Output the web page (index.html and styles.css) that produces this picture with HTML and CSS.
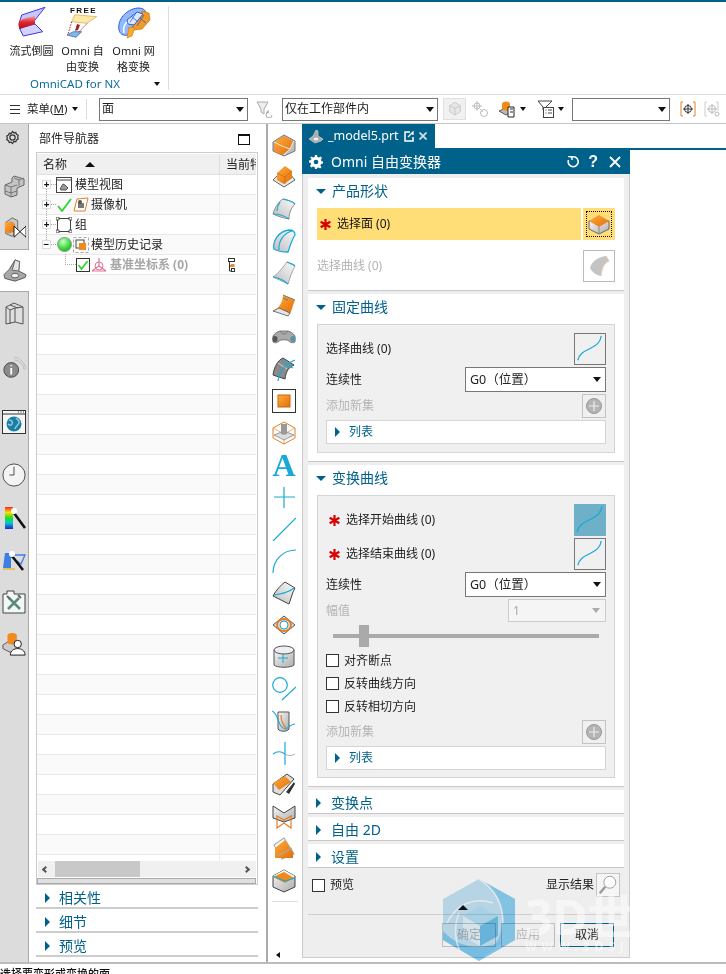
FILE: index.html
```html
<!DOCTYPE html>
<html lang="zh-CN">
<head>
<meta charset="utf-8">
<title>Omni 自由变换器</title>
<link rel="stylesheet" href="styles.css">
</head>
<body>
<svg class="defs" width="0" height="0" aria-hidden="true">
  <defs>
    <linearGradient id="gOrange" x1="0" y1="0" x2="1" y2="1"><stop offset="0" stop-color="#ffab3d"/><stop offset="1" stop-color="#e36f0a"/></linearGradient>
    <linearGradient id="gGrey" x1="0" y1="0" x2="1" y2="1"><stop offset="0" stop-color="#f6f6f6"/><stop offset="1" stop-color="#adadad"/></linearGradient>
    <linearGradient id="gSoft" x1="1" y1="0" x2="0" y2="1"><stop offset="0" stop-color="#fbfbfb"/><stop offset="1" stop-color="#bcbcbc"/></linearGradient>
    <linearGradient id="gRed" x1="0" y1="0" x2="0" y2="1"><stop offset="0" stop-color="#f7a0a0"/><stop offset=".5" stop-color="#d9262e"/><stop offset="1" stop-color="#b5121a"/></linearGradient>
    <radialGradient id="gBall" cx=".4" cy=".3" r=".8"><stop offset="0" stop-color="#c8ffc8"/><stop offset=".6" stop-color="#3fd93f"/><stop offset="1" stop-color="#14a014"/></radialGradient>
    <symbol id="i-box" viewBox="0 0 24 24"><path d="M1 9 12 2l11 6v10l-11 5-11-5z" fill="#bdbdbd" stroke="#777"/><path d="M2 9 12 3l9 5-3 8-8 6-8-4z" fill="url(#gOrange)"/><path d="M12 22l6-6 4-8M18 16 10 13 2 9" fill="none" stroke="#f4f4f4" stroke-width=".9"/></symbol>
    <symbol id="i-box-flat" viewBox="0 0 24 24"><path d="M1 15 6 10l12-1 5 6-11 7z" fill="#e6e6e6" stroke="#666"/><path d="M5 8 13 1l7 5 0 7-8 6-7-4z" fill="url(#gOrange)"/><path d="M5 8l8 4 7-6M13 12v7" fill="none" stroke="#c66a0f" stroke-width=".7"/></symbol>
    <symbol id="i-surf1" viewBox="0 0 24 24"><path d="M1 17C3 10 7 4 11 2c4 1 9 2 12 5-4 4-6 9-6 15-6-1-12-3-16-5z" fill="url(#gSoft)" stroke="#666" stroke-width=".7"/><path d="M11 2c4 1 9 2 12 5M1 17c6 0 12 2 16 5M8 5c-2 3-3 6-3 9" fill="none" stroke="#19a9d8" stroke-width="1.200"/></symbol>
    <symbol id="i-surf2" viewBox="0 0 24 24"><path d="M2 20C0 12 7 2 17 1c4 0 6 2 6 5-4 6-5 12-7 17-5 0-11-1-14-3z" fill="url(#gSoft)" stroke="#19a9d8" stroke-width="1.300"/><path d="M7 21C6 12 12 4 20 2" fill="none" stroke="#19a9d8" stroke-width="1.200"/></symbol>
    <symbol id="i-surf3" viewBox="0 0 24 24"><path d="M1 16C7 12 11 6 15 1l8 4c-3 5-5 12-7 18z" fill="url(#gSoft)" stroke="#777" stroke-width=".6"/><path d="M1 16c6 1 11 3 15 7M15 1c3 1 6 2 8 4" fill="none" stroke="#19a9d8" stroke-width="1.200"/></symbol>
    <symbol id="i-surf4" viewBox="0 0 24 24"><path d="M1 18c5-2 10-8 10-16l12 5c-2 5-3 9-5 14z" fill="url(#gOrange)"/><path d="M11 2l12 5M11 5l5 2" fill="none" stroke="#777" stroke-width="1"/><path d="M1 18l15 5 2-3-11-5z" fill="#e4e4e4" stroke="#555" stroke-width=".8"/></symbol>
    <symbol id="i-pipe" viewBox="0 0 24 24"><path d="M1 11c2-3 4-4 7-5h8c3 1 5 2 7 5v6c-2 1-3 1-5 0-2-3-10-3-12 0-2 1-3 1-5 0z" fill="#a9a9a9" stroke="#666" stroke-width=".8"/><path d="M8 6c2 4 6 4 8 0" fill="none" stroke="#777"/><ellipse cx="3" cy="14" rx="2.600" ry="3" fill="#555"/><ellipse cx="21" cy="14" rx="2.600" ry="3" fill="#5f8fa3"/></symbol>
    <symbol id="i-sweep" viewBox="0 0 24 24"><path d="M1 18C2 10 6 3 11 1l11 7c-5 2-8 6-9 14z" fill="#8a8a8a" stroke="#444"/><path d="M6 6l9 6" stroke="#d0d0d0"/><path d="M6 24C7 14 13 7 23 3M11 3c3 5 6 6 10 8" fill="none" stroke="#19a9d8" stroke-width="1.200"/></symbol>
    <symbol id="i-square" viewBox="0 0 24 24"><rect x=".5" y=".5" width="23" height="23" fill="#fff" stroke="#333"/><rect x="6" y="6" width="12" height="12" fill="url(#gOrange)" stroke="#c9650c"/></symbol>
    <symbol id="i-iso" viewBox="0 0 24 24"><path d="M12 1 23 7v10l-11 6L1 17V7z" fill="none" stroke="#e67e22"/><path d="M1 7l11 6 11-6M12 13v10" fill="none" stroke="#e67e22" stroke-width=".6"/><path d="M2 14l10-4 10 4-10 5z" fill="#ddd" stroke="#777" stroke-width=".7"/><path d="M9 3h6v10c-2 1-4 1-6 0z" fill="#999"/></symbol>
    <symbol id="i-plus" viewBox="0 0 24 24"><path d="M12 2v21M2 12h21" stroke="#19a9d8" stroke-width="1.200" fill="none"/></symbol>
    <symbol id="i-line" viewBox="0 0 24 24"><path d="M1 24 24 1" stroke="#19a9d8" stroke-width="1.200" fill="none"/></symbol>
    <symbol id="i-arc" viewBox="0 0 24 24"><path d="M1 24C1 11 11 1 24 1" stroke="#19a9d8" stroke-width="1.200" fill="none"/></symbol>
    <symbol id="i-patch" viewBox="0 0 24 24"><path d="M1 15C4 9 9 4 13 1l10 6c-3 5-4 11-6 16z" fill="url(#gSoft)" stroke="#444"/><path d="M2 14c7-1 14-2 20-7" fill="none" stroke="#19a9d8" stroke-width="1.200"/></symbol>
    <symbol id="i-ring" viewBox="0 0 24 24"><path d="M1 12 12 3l11 9-11 9z" fill="#ddd" stroke="#555"/><ellipse cx="12" cy="12" rx="7" ry="6" fill="none" stroke="#e67e22" stroke-width="2"/><circle cx="12" cy="12" r="4" fill="#fff" stroke="#19a9d8"/></symbol>
    <symbol id="i-cyl" viewBox="0 0 24 24"><path d="M2 5v15c2 3 18 3 20 0V5z" fill="url(#gGrey)" stroke="#555"/><ellipse cx="12" cy="5" rx="10" ry="4" fill="#eee" stroke="#555"/><path d="M11 8v10M6 13h10" stroke="#19a9d8"/></symbol>
    <symbol id="i-circline" viewBox="0 0 24 24"><circle cx="8" cy="8" r="7.300" fill="none" stroke="#19a9d8" stroke-width="1.200"/><path d="M10 23 24 10" stroke="#19a9d8" stroke-width="1.200"/></symbol>
    <symbol id="i-cylcurve" viewBox="0 0 24 24"><path d="M6 3h11v17c-2 3-9 3-11 0z" fill="url(#gGrey)" stroke="#555"/><path d="M0 2c8 4 5 17 14 18 4-3 6-5 9-5" fill="none" stroke="#19a9d8" stroke-width="1.100"/><path d="M9 6c0 6 2 10 5 13" fill="none" stroke="#e67e22" stroke-width="1.200"/></symbol>
    <symbol id="i-cross" viewBox="0 0 24 24"><path d="M13 1v23" stroke="#19a9d8" stroke-width="1.200"/><path d="M1 13c4-3 8-3 12 0" fill="none" stroke="#19a9d8" stroke-width="1.100"/><path d="M13 13c3 2 7 2 10 0" fill="none" stroke="#aaa"/></symbol>
    <symbol id="i-pen" viewBox="0 0 24 24"><path d="M1 11 15 1l7 5-14 16-7-3z" fill="#ddd" stroke="#444"/><path d="M1 10 13 3l6 6-12 8z" fill="url(#gOrange)"/><path d="M14 19 22 9l1 2-6 10z" fill="#333"/></symbol>
    <symbol id="i-bow" viewBox="0 0 24 24"><path d="M1 1 12 8 23 1v12l-11 4L1 13z" fill="url(#gGrey)" stroke="#444"/><path d="M5 23V11l7 4 7-4v12l-7-5z" fill="none" stroke="#e67e22" stroke-width="1.200"/></symbol>
    <symbol id="i-sect" viewBox="0 0 24 24"><path d="M2 8 12 1l10 16-12 5z" fill="none" stroke="#aaa" stroke-width="1.200"/><path d="M3 11 13 3l8 12v6H3z" fill="url(#gOrange)"/><path d="M6 19 20 11" stroke="#aaa" stroke-width="1.300"/></symbol>
    <symbol id="i-cut" viewBox="0 0 24 24"><path d="M1 7 12 1l11 6v11l-11 5-11-5z" fill="url(#gGrey)" stroke="#444"/><path d="M1 7 12 1l11 6-10 5z" fill="#f2f2f2"/><path d="M1 8 12 3l10 6-9 5z" fill="#f08a1d"/><path d="M1 7l12 5 10-3" fill="none" stroke="#19a9d8" stroke-width="1.200"/></symbol>
    <symbol id="i-curve" viewBox="0 0 32 32"><path d="M3 28C5 20 11 18 17 15c6-3 10-6 11-13" fill="none" stroke="#19a9d8" stroke-width="1.300"/></symbol>
    <symbol id="i-addset" viewBox="0 0 24 24"><rect x=".5" y=".5" width="23" height="23" fill="#f0f0f0" stroke="#c4c4c4"/><circle cx="12" cy="12" r="7.500" fill="#b4b4b4" stroke="#999"/><path d="M12 7v10M7 12h10" stroke="#eee" stroke-width="1.200"/></symbol>
    <symbol id="i-star" viewBox="0 0 12 12"><path d="M6 0v12M.7 3 11.300 9M.7 9 11.300 3" stroke="#d90000" stroke-width="2.400"/></symbol>
    <symbol id="i-wire" viewBox="0 0 24 24"><path d="M4 7 12 2l8 5v9l-8 5-8-5z" fill="#e7e7e7" stroke="#bbb"/><path d="M12 11v10M4 7l8 4 8-4" stroke="#bbb" fill="none"/></symbol>
  </defs>
</svg>

<div class="topline"></div>

<header class="ribbon">
  <div class="ribbon-group">
    <div class="ribbon-tools">
      <div class="rtool">
        <svg class="rtool-icon" viewBox="0 0 32 32"><path d="M5.700 9 29 1.300 19 14 3.500 16z" fill="#c9c6ff" stroke="#3a38e0"/><path d="M3.300 22 19 18l7.700 7.700L7.300 30z" fill="#d4d2ff" stroke="#3a38e0"/><path d="M3.300 15C8 12 14 11 19 10v8L4 23C2 21 2 17 3.300 15z" fill="url(#gRed)"/></svg>
        <span>流式倒圆</span>
      </div>
      <div class="rtool">
        <svg class="rtool-icon" viewBox="0 0 32 32"><text x="3" y="7" class="free-label">FREE</text><path d="M8 8.700 29.700 10.700 19.700 17.300 4.700 15.700z" fill="#ffe9a8" stroke="#d2aa44" stroke-width=".7"/><path d="M0 29l6.300-3.300h8.400L9 31.300z" fill="#7fb7ea" stroke="#2a5f99" stroke-width=".7"/><path d="M4.700 15.700 1 28M20 17.500 11 27" stroke="#b32020" fill="none" stroke-dasharray="1.500 1.200"/><path d="M8 25l2-7 3 1-2 5z" fill="#a51f1f"/></svg>
        <span>Omni 自<br>由变换</span>
      </div>
      <div class="rtool">
        <svg class="rtool-icon" viewBox="0 0 32 32"><path d="M1 24C-1 14 8 3 20 2c6 0 9 3 7 8L14 21l-4 8c-5 1-8-1-9-5z" fill="#92b9ff" stroke="#2a5fd0"/><path d="M24 5l7 2 1 7-8 9-8 1-1-4z" fill="#f59a23" stroke="#b76a0a" stroke-width=".6"/><path d="M11 21l6 1-3 8-5 2z" fill="#f9a92b" stroke="#c97f10" stroke-width=".6"/><path d="M9 14 19 6l6 2-9 11-6-1z" fill="#dce8ff" stroke="#2a5fd0"/><path d="M13 10l7 6M18 7l-6 9M26 9l-7 11M22 12l6 5" stroke="#2a5fd0" stroke-width=".8"/><path d="M6 27c-1-4 0-8 3-11" fill="none" stroke="#fff" stroke-width="1.500"/></svg>
        <span>Omni 网<br>格变换</span>
      </div>
    </div>
    <div class="ribbon-group-label"><span>OmniCAD for NX</span><i class="tri-down tri-small"></i></div>
  </div>
</header>

<nav class="toolbar">
  <div class="menu-btn">
    <svg class="hamburger" viewBox="0 0 10 9"><path d="M0 .5h10M0 4.500h10M0 8.500h10" stroke="#333"/></svg>
    <span>菜单(<u>M</u>)</span>
    <i class="tri-down tri-small"></i>
  </div>
  <div class="tb-sep"></div>
  <div class="select sel-type"><span>面</span><i class="tri-down"></i></div>
  <svg class="tb-icon tb-filter" viewBox="0 0 17 17"><path d="M1 1h11L8 8v5L5 11V8z" fill="#eee" stroke="#aaa"/><path d="M16 14a3 3 0 1 1-3-3h-2m1.500-1.500L10.500 11l1.500 1.500" fill="none" stroke="#aaa"/></svg>
  <div class="select sel-scope"><span>仅在工作部件内</span><i class="tri-down"></i></div>
  <div class="tb-boxed"><svg class="tb-icon" viewBox="0 0 24 24"><use href="#i-wire"/></svg></div>
  <svg class="tb-icon tb-link" viewBox="0 0 17 17"><circle cx="5" cy="5" r="3" fill="none" stroke="#bbb"/><circle cx="12" cy="12" r="3.500" fill="none" stroke="#bbb"/><path d="M5 0v10M0 5h10M8 8l3 3" stroke="#bbb"/></svg>
  <svg class="tb-icon tb-db" viewBox="0 0 18 18"><path d="M1 11 8 8l7 3-7 4z" fill="#bbb" stroke="#555"/><ellipse cx="8" cy="4" rx="4" ry="2.500" fill="#f08a1d"/><path d="M4 4v5c1 2 7 2 8 0V4z" fill="#f08a1d"/><path d="M10 7h6v10h-6z" fill="#fff" stroke="#222"/><path d="M12 9h3M12 12h3" stroke="#222"/></svg>
  <i class="tri-down tri-small tb-arrow"></i>
  <svg class="tb-icon tb-filter2" viewBox="0 0 17 18"><path d="M1 1h14L9 7v3H6V7z" fill="#fff" stroke="#444"/><rect x="6.500" y="7.500" width="10" height="10" fill="#fff" stroke="#444"/><path d="M8.500 10h1M11 10h4M8.500 13h1M11 13h4" stroke="#444"/></svg>
  <i class="tri-down tri-small tb-arrow2"></i>
  <div class="select sel-blank"><span></span><i class="tri-down"></i></div>
  <svg class="tb-icon tb-snap" viewBox="0 0 16 16"><path d="M3 1H1v14h2M13 1h2v14h-2" stroke="#e67e22" fill="none"/><circle cx="8" cy="8" r="3.500" fill="none" stroke="#333"/><path d="M8 3v10M3 8h10" stroke="#333"/></svg>
  <svg class="tb-icon tb-snap2" viewBox="0 0 16 16"><path d="M3 1H1v14h2M12 1h2v9" stroke="#ccc" fill="none"/><circle cx="8" cy="8" r="3.500" fill="none" stroke="#bbb"/><path d="M8 3v10M3 8h10" stroke="#bbb"/><circle cx="13" cy="13" r="2" fill="none" stroke="#bbb"/></svg>
</nav>

<main class="main">
  <aside class="rail">
    <div class="rail-top">
      <svg class="rail-gear" viewBox="0 0 16 16"><path d="M8 1.500l1.500 1.500 2-.3.800 2 1.800.9-.6 2 .6 2-1.800.9-.8 2-2-.3L8 14.500l-1.500-1.500-2 .3-.8-2-1.800-.9.600-2-.6-2 1.800-.9.800-2 2 .3z" fill="none" stroke="#333" stroke-width="1.300"/><circle cx="8" cy="8" r="2.800" fill="none" stroke="#333" stroke-width="1.300"/></svg>
    </div>
    <div class="rail-item"><svg viewBox="0 0 24 24"><path d="M12 2l10 3v6l-7 3v7l-6 2-6-3v-9l7-3V4z" fill="#c4c4c4" stroke="#666"/><path d="M3 11l6 2 6-2M9 13v10M12 4l5 2 5-2M17 6v6M3 17l6 2 6-2" fill="none" stroke="#777"/></svg></div>
    <div class="rail-item"><svg viewBox="0 0 26 26"><path d="M4 7 11 2l6 3v12l-6 5-7-3z" fill="#c8c8c8" stroke="#666"/><path d="M3 7l8-1 3 3v8l-8 2-3-3z" fill="url(#gOrange)"/><path d="M13 11 26 23V11L13 23z" fill="#fff" stroke="#111"/></svg></div>
    <div class="rail-item rail-active"><svg viewBox="0 0 26 26"><path d="M1 17 7 11 13 1l5 2-1 10 8 4-1 3-11 4-11-3z" fill="#a8a8a8" stroke="#555"/><path d="M13 1l5 2-1 10-7-1z" fill="#e4e4e4" stroke="#666"/><ellipse cx="13" cy="18" rx="4" ry="2.500" fill="#f1f1f1" stroke="#555"/></svg></div>
    <div class="rail-item"><svg viewBox="0 0 24 24"><path d="M4 6 12 2l9 4v17l-8-2-9 2z" fill="#dedede" stroke="#555"/><path d="M4 6l4 3v14M8 9l5-2v14M13 7l8-1M8 4l8 3" fill="none" stroke="#555"/></svg></div>
    <div class="rail-group-a">
      <div class="rail-item"><svg viewBox="0 0 26 26"><circle cx="10" cy="14" r="8" fill="#8a8a8a" stroke="#444"/><path d="M10 9v1M10 12v7" stroke="#fff" stroke-width="2"/><path d="M13 3a12 12 0 0 1 11 11M13 0a15 15 0 0 1 13 14" fill="none" stroke="#bbb"/></svg></div>
      <div class="rail-item"><svg viewBox="0 0 24 24"><rect x=".5" y=".5" width="23" height="23" fill="#f6f6f6" stroke="#333"/><path d="M.5 4h23M16 2h1M18.500 2h1M21 2h1" stroke="#333"/><circle cx="12" cy="14" r="7.500" fill="#1b7fa3"/><path d="M7 10c3 0 4 2 3 4s-3 1-4 0M14 8c2 2 4 3 3 5s-4 4-4 6" fill="none" stroke="#8ecbdb" stroke-width="1.500"/></svg></div>
      <div class="rail-item"><svg viewBox="0 0 26 26"><circle cx="13" cy="13" r="12" fill="#f4f4f4" stroke="#444"/><path d="M13 4v9H8" fill="none" stroke="#444"/></svg></div>
    </div>
    <div class="rail-group-b">
      <div class="rail-item"><svg viewBox="0 0 24 24"><defs><linearGradient id="gHue" x1="0" y1="0" x2="0" y2="1"><stop offset="0" stop-color="#f22"/><stop offset=".25" stop-color="#fd0"/><stop offset=".5" stop-color="#2d2"/><stop offset=".72" stop-color="#0cc"/><stop offset="1" stop-color="#22c"/></linearGradient></defs><rect x="3" y="1" width="8" height="22" fill="url(#gHue)"/><path d="M12 7l11 15" stroke="#111" stroke-width="2.600"/><circle cx="12" cy="5" r="3" fill="#fff"/></svg></div>
      <div class="rail-item"><svg viewBox="0 0 24 24"><path d="M3 5h6v15H1z" fill="#3b7fe0"/><path d="M7 7h16l-4 9z" fill="none" stroke="#3b7fe0" stroke-width="1.300"/><path d="M1 21h12" stroke="#e8b82e" stroke-width="1.500"/><path d="M10 8l11 14" stroke="#111" stroke-width="2.500"/><circle cx="10" cy="6" r="3" fill="#fff"/></svg></div>
      <div class="rail-item"><svg viewBox="0 0 24 24"><path d="M1 4h4V1h7v3h11v19H1z" fill="#f4f7f7" stroke="#444"/><path d="M6 19 17 8M7 8l11 11" stroke="#5a8a7a" stroke-width="2.500"/><path d="M5 6l3 3M16 5l3 3" stroke="#666" stroke-width="2"/></svg></div>
      <div class="rail-item"><svg viewBox="0 0 26 26"><path d="M1 14 9 9l8 4v5l-8 4-8-4z" fill="#ccc" stroke="#555"/><ellipse cx="11" cy="4" rx="5" ry="3" fill="#f08a1d"/><path d="M6 4v8c1 2 9 2 10 0V4z" fill="#f08a1d"/><circle cx="17" cy="13" r="4" fill="#fff" stroke="#111"/><path d="M9 25c0-5 4-7 8-7s8 2 8 7z" fill="#fff" stroke="#111"/></svg></div>
    </div>
  </aside>

  <section class="nav">
    <div class="nav-head"><span>部件导航器</span><i class="maximize"></i></div>
    <div class="nav-frame">
      <div class="tbl-head"><div class="c-name"><span>名称</span><i class="tri-up"></i></div><div class="c-cur">当前特</div></div>
      <div class="row">
        <div class="c-name"><i class="exp">+</i><svg class="ti16" viewBox="0 0 16 16"><rect x=".5" y=".5" width="15" height="15" fill="#fff" stroke="#444"/><path d="M.5 3h15" stroke="#444"/><path d="M4 12l3-5 2 1 3 3-2 2H5z" fill="#999" stroke="#555"/></svg><span class="t1">模型视图</span></div><div class="c-cur"></div>
      </div>
      <div class="row row-alt">
        <div class="c-name"><i class="exp exp-line">+</i><svg class="tick" viewBox="0 0 15 14"><path d="M1 8l4 5L14 1" fill="none" stroke="#2fd62f" stroke-width="1.800"/></svg><svg class="ti16 ti-b" viewBox="0 0 16 16"><path d="M1 14 4 2l11-1-3 13z" fill="#fff" stroke="#e67e22"/><path d="M5 6h6v5H5z" fill="#777"/><circle cx="7" cy="5" r="2" fill="#555"/></svg><span class="t2">摄像机</span></div><div class="c-cur"></div>
      </div>
      <div class="row">
        <div class="c-name"><i class="exp exp-line">+</i><svg class="ti16" viewBox="0 0 16 16"><rect x="1.500" y="1.500" width="13" height="13" fill="#fff" stroke="#444"/><path d="M0 0h3v3H0zM13 0h3v3h-3zM0 13h3v3H0zM13 13h3v3h-3z" fill="#fff" stroke="#333" stroke-width=".8"/></svg><span class="t1">组</span></div><div class="c-cur"></div>
      </div>
      <div class="row row-alt">
        <div class="c-name"><i class="exp exp-line">−</i><svg class="tick ball" viewBox="0 0 14 14"><circle cx="7" cy="7" r="6.500" fill="url(#gBall)" stroke="#8a8"/></svg><svg class="ti16 ti-b" viewBox="0 0 16 16"><rect x=".5" y=".5" width="15" height="15" fill="none" stroke="#aaa" stroke-dasharray="3 2"/><rect x="3" y="3" width="8" height="8" fill="#fff" stroke="#444"/><rect x="6" y="6" width="7" height="7" fill="#f08a1d"/></svg><span class="t2">模型历史记录</span></div><div class="c-cur"></div>
      </div>
      <div class="row">
        <div class="c-name c-child"><i class="child-line"></i><svg class="chk-ok" viewBox="0 0 14 14"><rect x=".5" y=".5" width="13" height="13" fill="#fff" stroke="#333"/><path d="M2.500 7l3 4 6-8" fill="none" stroke="#2fd62f" stroke-width="1.700"/></svg><svg class="ti16 ti-c" viewBox="0 0 16 16"><circle cx="8" cy="9" r="4" fill="none" stroke="#e0729a"/><path d="M8 1v8L1 14M8 9l7 5M1 14h14" fill="none" stroke="#e0729a" stroke-width="1.200"/></svg><span class="t3">基准坐标系 (0)</span></div>
        <div class="c-cur"><svg class="feat" viewBox="0 0 7 14"><rect x=".5" y=".5" width="6" height="3" fill="#fff" stroke="#333"/><path d="M1.500 4v9H3M1.500 8H3" fill="none" stroke="#333"/><rect x="3" y="6" width="3.500" height="3" fill="#f08a1d"/><rect x="3.500" y="10.500" width="3" height="3" fill="#fff" stroke="#333"/></svg></div>
      </div>
      <div class="rows-empty"></div>
      <div class="hscroll"><i class="hs-l"></i><div class="hs-thumb"></div><i class="hs-r"></i></div>
      <div class="sash"></div>
    </div>
    <div class="nav-sec"><i class="tri-right"></i><span>相关性</span></div>
    <div class="nav-sec"><i class="tri-right"></i><span>细节</span></div>
    <div class="nav-sec"><i class="tri-right"></i><span>预览</span></div>
  </section>

  <aside class="strip">
    <svg viewBox="0 0 24 24"><use href="#i-box"/></svg>
    <svg viewBox="0 0 24 24"><use href="#i-box-flat"/></svg>
    <svg viewBox="0 0 24 24"><use href="#i-surf1"/></svg>
    <svg viewBox="0 0 24 24"><use href="#i-surf2"/></svg>
    <svg viewBox="0 0 24 24"><use href="#i-surf3"/></svg>
    <svg viewBox="0 0 24 24"><use href="#i-surf4"/></svg>
    <svg viewBox="0 0 24 24"><use href="#i-pipe"/></svg>
    <svg viewBox="0 0 24 24"><use href="#i-sweep"/></svg>
    <svg viewBox="0 0 24 24"><use href="#i-square"/></svg>
    <svg viewBox="0 0 24 24"><use href="#i-iso"/></svg>
    <span class="strip-a">A</span>
    <svg viewBox="0 0 24 24"><use href="#i-plus"/></svg>
    <svg viewBox="0 0 24 24"><use href="#i-line"/></svg>
    <svg viewBox="0 0 24 24"><use href="#i-arc"/></svg>
    <svg viewBox="0 0 24 24"><use href="#i-patch"/></svg>
    <svg viewBox="0 0 24 24"><use href="#i-ring"/></svg>
    <svg viewBox="0 0 24 24"><use href="#i-cyl"/></svg>
    <svg viewBox="0 0 24 24"><use href="#i-circline"/></svg>
    <svg viewBox="0 0 24 24"><use href="#i-cylcurve"/></svg>
    <svg viewBox="0 0 24 24"><use href="#i-cross"/></svg>
    <svg viewBox="0 0 24 24"><use href="#i-pen"/></svg>
    <svg viewBox="0 0 24 24"><use href="#i-bow"/></svg>
    <svg viewBox="0 0 24 24"><use href="#i-sect"/></svg>
    <svg viewBox="0 0 24 24"><use href="#i-cut"/></svg>
    <div class="strip-rule"></div>
    <i class="strip-more"></i>
  </aside>

  <section class="work">
    <div class="tabs">
      <div class="tab">
        <svg class="tab-part" viewBox="0 0 16 16"><path d="M1 11 5 8l3-6 2 1 0 5 5 3-2 2-6 2z" fill="#aaa" stroke="#ddd" stroke-width=".6"/><ellipse cx="8" cy="11" rx="2.500" ry="1.500" fill="#eee"/></svg>
        <span>_model5.prt</span>
        <svg class="tab-pop" viewBox="0 0 10 11"><path d="M6 1H1v9h8V6" fill="none" stroke="#fff" stroke-width="1.500"/><path d="M4 6l5-5v3" fill="none" stroke="#fff" stroke-width="1.300"/></svg>
        <svg class="tab-x" viewBox="0 0 8 8"><path d="M.5.5l7 7M7.500.5l-7 7" stroke="#cfe0e8" stroke-width="1.800"/></svg>
      </div>
    </div>
    <div class="dialog">
      <div class="dlg-title">
        <svg class="dlg-gear" viewBox="0 0 14 14"><path d="M6 0h2l.4 2 1.500.6L11.600 1.500 13 3l-1.100 1.700.6 1.500 1.500.4v2l-2 .4-.6 1.500 1.100 1.700-1.400 1.300-1.700-1.100-1.500.6L8 14H6l-.4-2-1.500-.6L2.400 12.500 1 11l1.100-1.700-.6-1.500-1.500-.4v-2l2-.4.600-1.500L1 3l1.400-1.500 1.700 1.100 1.500-.6z" fill="#fff"/><circle cx="7" cy="7" r="2.300" fill="#00618a"/></svg>
        <span class="dlg-name">Omni 自由变换器</span>
        <svg class="dlg-btn" viewBox="0 0 12 12"><path d="M3.500 1.500A5 5 0 1 1 1.500 4" fill="none" stroke="#fff" stroke-width="1.600"/><path d="M1 .5h4v3.500" fill="none" stroke="#fff" stroke-width="1.400"/></svg>
        <span class="dlg-q">?</span>
        <svg class="dlg-close" viewBox="0 0 12 12"><path d="M1 1l10 10M11 1 1 11" stroke="#fff" stroke-width="1.800"/></svg>
      </div>

      <div class="panel panel-shape">
        <div class="sec-head"><i class="tri-open"></i><span>产品形状</span></div>
        <div class="sel-row">
          <div class="sel-label"><svg class="star" viewBox="0 0 12 12"><use href="#i-star"/></svg><span>选择面 (0)</span></div>
          <div class="sel-btn"><div class="sel-btn-focus"><svg viewBox="0 0 24 24"><path d="M2 9v8l10 5 10-5V9z" fill="url(#gGrey)" stroke="#666"/><path d="M2 9l10-6 10 6-10 6z" fill="url(#gOrange)"/><path d="M12 15v7" stroke="#888"/></svg></div></div>
        </div>
        <div class="dis-row">
          <span class="dis">选择曲线 (0)</span>
          <div class="dis-btn"><svg viewBox="0 0 24 24"><path d="M3 14C5 7 11 3 19 2l3 5c-5 2-7 7-8 15-5-1-9-4-11-8z" fill="#c4c4c4"/><path d="M19 2l3 5c-5 2-7 7-8 15" fill="none" stroke="#f0c9a8"/></svg></div>
        </div>
      </div>

      <div class="panel panel-fixed">
        <div class="sec-head"><i class="tri-open"></i><span>固定曲线</span></div>
        <div class="box">
          <div class="frow frow-32"><span>选择曲线 (0)</span><button class="curve-btn"><svg viewBox="0 0 32 32"><use href="#i-curve"/></svg></button></div>
          <div class="frow frow-sel"><span>连续性</span><div class="select sel-g0"><span>G0（位置）</span><i class="tri-down"></i></div></div>
          <div class="frow frow-add"><span class="dis">添加新集</span><svg class="add-btn" viewBox="0 0 24 24"><use href="#i-addset"/></svg></div>
          <div class="list-row"><i class="tri-right"></i><span>列表</span></div>
        </div>
      </div>

      <div class="panel panel-trans">
        <div class="sec-head"><i class="tri-open"></i><span>变换曲线</span></div>
        <div class="box box-trans">
          <div class="frow frow-32 frow-req"><div class="req"><svg class="star" viewBox="0 0 12 12"><use href="#i-star"/></svg><span>选择开始曲线 (0)</span></div><button class="curve-btn curve-on"><svg viewBox="0 0 32 32"><use href="#i-curve"/></svg></button></div>
          <div class="frow frow-32 frow-req"><div class="req"><svg class="star" viewBox="0 0 12 12"><use href="#i-star"/></svg><span>选择结束曲线 (0)</span></div><button class="curve-btn"><svg viewBox="0 0 32 32"><use href="#i-curve"/></svg></button></div>
          <div class="frow frow-sel"><span>连续性</span><div class="select sel-g0"><span>G0（位置）</span><i class="tri-down"></i></div></div>
          <div class="frow frow-amp"><span class="dis">幅值</span><div class="select sel-amp"><span>1</span><i class="tri-down tri-grey"></i></div></div>
          <div class="slider"><i class="thumb"></i></div>
          <div class="checks">
            <label class="check"><i class="cb"></i><span>对齐断点</span></label>
            <label class="check"><i class="cb"></i><span>反转曲线方向</span></label>
            <label class="check"><i class="cb"></i><span>反转相切方向</span></label>
          </div>
          <div class="frow frow-add"><span class="dis">添加新集</span><svg class="add-btn" viewBox="0 0 24 24"><use href="#i-addset"/></svg></div>
          <div class="list-row"><i class="tri-right"></i><span>列表</span></div>
        </div>
      </div>

      <div class="panel panel-col"><i class="tri-right"></i><span>变换点</span></div>
      <div class="panel panel-col"><i class="tri-right"></i><span>自由 2D</span></div>
      <div class="panel panel-col"><i class="tri-right"></i><span>设置</span></div>

      <div class="preview-row">
        <label class="check"><i class="cb"></i><span>预览</span></label>
        <div class="show-result"><span>显示结果</span><div class="lens"><svg viewBox="0 0 24 24"><circle cx="14" cy="9" r="6.500" fill="#fff" stroke="#999"/><path d="M9 14 3 21" stroke="#999" stroke-width="2.600"/></svg></div></div>
      </div>
      <div class="collapse-row"><i class="tri-up"></i></div>
      <div class="dlg-foot">
        <div class="btn btn-dis">确定</div>
        <div class="btn btn-dis">应用</div>
        <div class="btn btn-cancel">取消</div>
      </div>
    </div>
  </section>
</main>

<footer class="status">选择要变形或变换的面</footer>

<div class="watermark" aria-hidden="true">
  <svg class="wm-hex" viewBox="0 0 72 82"><path d="M36 0 72 20v41L36 82 0 61V20z" fill="#c4e4f6"/><path d="M36 0 72 20v41L36 82C54 70 64 48 58 28 54 14 46 6 36 0z" fill="#8bd0f4"/><path d="M0 61 36 82 60 62C42 70 18 72 0 52z" fill="#7fcaf2"/><path d="M36 0C52 10 60 26 60 44M4 44C14 24 32 18 50 24M18 74C10 60 12 44 16 34" fill="none" stroke="#fff" stroke-opacity=".8" stroke-width="1.500"/><path d="M20 37 37 27l18 10-18 10z" fill="#b4e0f7"/><path d="M20 37l17 10v20L20 57z" fill="#e4f4fc"/><path d="M55 37 37 47v20l18-10z" fill="#6fc0ea"/></svg>
  <div class="wm-text"><span class="wm-big">3D世</span><span class="wm-small">WWW.3DSJ</span></div>
</div>
</body>
</html>
```
FILE: styles.css
```css
* { box-sizing: border-box; }
html, body { margin: 0; padding: 0; }
body {
  width: 726px;
  height: 974px;
  overflow: hidden;
  background: #fff;
  color: #222;
  font: 12px/16px "Noto Sans", "Noto Sans CJK SC", sans-serif;
  position: relative;
}
i { display: block; font-style: normal; }
svg { display: block; flex: none; }
.defs { position: absolute; }

.tri-down { width: 0; height: 0; border: 4px solid transparent; border-top: 5px solid #111; border-bottom: 0; flex: none; }
.tri-small { border-width: 3px; border-top-width: 4px; border-bottom-width: 0; }
.tri-grey { border-top-color: #aaa; }
.tri-up { width: 0; height: 0; border: 5px solid transparent; border-bottom: 5px solid #111; border-top: 0; }
.tri-right { width: 0; height: 0; border: 5px solid transparent; border-left: 5px solid #00618a; border-right: 0; flex: none; }
.tri-open { width: 0; height: 0; border: 5px solid transparent; border-top: 5px solid #00618a; border-bottom: 0; flex: none; }

.topline { height: 2px; background: #00618a; }

.ribbon { height: 93px; border-bottom: 1px solid #ddd; display: flex; padding-top: 4px; }
.ribbon-group { width: 169px; height: 84px; border-right: 1px solid #ddd; display: flex; flex-direction: column; }
.ribbon-tools { display: flex; padding-left: 6px; height: 71px; }
.rtool { width: 51px; display: flex; flex-direction: column; align-items: center; text-align: center; font-size: 11px; line-height: 16px; color: #222; }
.rtool-icon { width: 32px; height: 32px; margin-bottom: 5px; overflow: visible; }
.free-label { font: bold 8px "Liberation Sans", sans-serif; letter-spacing: 1.400px; fill: #111; }
.ribbon-group-label { display: flex; align-items: center; color: #0a6c9c; font-size: 11.500px; padding-left: 30px; height: 16px; margin-top: 1px; }
.ribbon-group-label span { width: 124px; }

.toolbar { height: 29px; border-bottom: 1px solid #c4c4c4; display: flex; align-items: center; padding-left: 10px; }
.menu-btn { display: flex; align-items: center; width: 76px; flex: none; }
.hamburger { width: 10px; height: 9px; margin-right: 7px; }
.menu-btn span { margin-right: 4px; width: 41px; white-space: nowrap; font-size: 11.500px; }
.tb-sep { width: 1px; height: 20px; background: #ddd; margin-right: 12px; }
.select { height: 23px; border: 1px solid #777; background: #fff; display: flex; align-items: center; justify-content: space-between; padding: 0 3px 0 2px; flex: none; }
.sel-type { width: 149px; }
.tb-icon { width: 16px; height: 16px; }
.tb-filter { width: 17px; height: 17px; margin: 0 9px 0 8px; }
.sel-scope { width: 156px; }
.tb-boxed { width: 23px; height: 22px; margin-left: 5px; background: #f1f1f1; border: 1px solid #e0e0e0; display: flex; align-items: center; justify-content: center; }
.tb-link { width: 17px; height: 17px; margin-left: 6px; }
.tb-db { width: 18px; height: 18px; margin-left: 9px; }
.tb-arrow { margin-left: 4px; }
.tb-filter2 { width: 17px; height: 18px; margin-left: 11px; }
.tb-arrow2 { margin-left: 4px; }
.sel-blank { width: 98px; margin-left: 8px; }
.tb-snap { margin-left: 10px; }
.tb-snap2 { margin-left: 8px; }

.main { height: 840px; display: flex; border-bottom: 2px solid #bbb; }

.rail { width: 29px; flex: none; background: #dcdcdc; border-right: 1px solid #a8a8a8; display: flex; flex-direction: column; }
.rail-top { height: 41px; padding: 6px 0 0 5px; }
.rail-gear { width: 15px; height: 15px; }
.rail-item { height: 42px; display: flex; align-items: center; justify-content: center; flex: none; }
.rail-item svg { width: 24px; height: 24px; }
.rail-active { background: #fff; width: 29px; height: 43px; border-top: 1px solid #aaa; border-bottom: 1px solid #aaa; margin-right: -1px; position: relative; }
.rail-group-a { display: flex; flex-direction: column; gap: 11px; padding-top: 14px; }
.rail-group-b { display: flex; flex-direction: column; gap: 0; margin-top: 1px; }

.nav { width: 237px; flex: none; padding-left: 7px; display: flex; flex-direction: column; }
.nav-head { height: 28px; display: flex; align-items: center; justify-content: space-between; padding: 2px 16px 0 3px; }
.maximize { width: 12px; height: 11px; border: 1px solid #111; border-top-width: 2px; }
.nav-frame { height: 733px; width: 222px; border: 1px solid #ccc; display: flex; flex-direction: column; padding: 1px 1px 0 0; }
.tbl-head { height: 21px; display: flex; background: #f0f0f0; border-bottom: 1px solid #e0e0e0; padding-top: 1px; }
.tbl-head .c-name { gap: 18px; padding-left: 6px; }
.tbl-head .c-cur { overflow: hidden; white-space: nowrap; padding-left: 6px; border-left: 1px solid #ddd; line-height: 19px; }
.c-name { width: 182px; display: flex; align-items: center; flex: none; }
.c-cur { width: 37px; flex: none; border-left: 1px solid #eee; }
.row { height: 20px; display: flex; border-bottom: 1px solid #e8e8e8; }
.row-alt { background: #fafafa; }
.exp { width: 9px; height: 9px; margin-left: 5px; border: 1px solid #ddd; background: #fff; font-size: 10px; line-height: 7px; text-align: center; color: #111; font-weight: 700; flex: none; position: relative; }
.exp::after { content: ""; position: absolute; left: 8px; top: 3px; width: 5px; border-top: 1px dotted #aaa; }
.exp-line::before { content: ""; position: absolute; left: 3px; top: -12px; height: 11px; border-left: 1px dotted #aaa; }
.ti16 { width: 16px; height: 16px; margin-left: 5px; }
.ti-b { margin-left: 1px; }
.t1 { margin-left: 3px; }
.t2 { margin-left: 2px; }
.t3 { margin-left: 3px; color: #a6a6a6; font-weight: 700; }
.tick { width: 15px; height: 14px; margin-left: 6px; }
.ball { width: 15px; height: 15px; }
.c-child { padding-left: 28px; position: relative; }
.child-line { width: 11px; height: 11px; margin-top: -10px; border-left: 1px dotted #aaa; border-bottom: 1px dotted #aaa; flex: none; }
.chk-ok { width: 14px; height: 14px; }
.ti-c { margin-left: 1px; }
.feat { width: 7px; height: 14px; margin: 3px 0 0 8px; }
.rows-empty {
  flex: 1;
  background:
    linear-gradient(#eee, #eee) 182px 0 / 1px 100% no-repeat,
    repeating-linear-gradient(#fafafa 0 19px, #e8e8e8 19px 20px, #fff 20px 39px, #e8e8e8 39px 40px);
}
.hscroll { height: 16px; margin: 0 0 0 1px; background: #f0f0f0; display: flex; align-items: center; padding: 0 7px 0 5px; flex: none; }
.hs-l, .hs-r { width: 5px; height: 5px; border-left: 2px solid #555; border-bottom: 2px solid #555; transform: rotate(45deg); flex: none; }
.hs-r { transform: rotate(225deg); }
.hs-thumb { width: 85px; height: 16px; background: #c8c8c8; margin: 0 auto 0 7px; }
.sash { height: 6px; margin-top: 1px; background: #e0e0e0; border: 1px solid #aaa; flex: none; }
.nav-sec { width: 222px; height: 24px; flex: none; display: flex; align-items: center; gap: 9px; padding: 3px 0 0 9px; color: #00618a; font-size: 14px; border-bottom: 2px solid #ccc; }

.strip { width: 36px; flex: none; border-left: 2px solid #aaa; padding: 9px 0 0 4px; display: flex; flex-direction: column; gap: 8px; position: relative; }
.strip svg { width: 24px; height: 24px; }
.strip-a { height: 24px; width: 24px; font: bold 32px/24px "Liberation Serif", serif; color: #19a9d8; text-align: center; }
.strip-rule { width: 26px; height: 1px; background: #ddd; flex: none; }
.strip-more { width: 0; height: 0; border: 3px solid transparent; border-right: 4px solid #111; border-left: 0; margin: 42px 0 0 4px; }

.work { flex: 1; min-width: 0; display: flex; flex-direction: column; }
.tabs { height: 26px; border-bottom: 2px solid #00618a; flex: none; }
.tab { width: 133px; height: 24px; background: #00618a; color: #fff; display: flex; align-items: center; padding-left: 6px; font-size: 12.500px; }
.tab-part { width: 16px; height: 16px; margin-right: 4px; }
.tab-pop { width: 10px; height: 11px; margin: 0 0 0 5px; }
.tab-x { width: 8px; height: 8px; margin-left: 5px; }

.dialog { width: 328px; height: 808px; background: #eee; border: 1px solid #ccc; border-top: 0; display: flex; flex-direction: column; flex: none; }
.dlg-title { height: 24px; margin: 0 -1px; flex: none; background: #00618a; color: #fff; display: flex; align-items: center; padding: 0 9px 0 7px; font-size: 14px; }
.dlg-gear { width: 14px; height: 14px; margin-right: 8px; }
.dlg-name { flex: 1; }
.dlg-btn { width: 12px; height: 12px; margin-right: 9px; }
.dlg-q { font: bold 16px/16px "Liberation Sans", sans-serif; margin-right: 11px; }
.dlg-close { width: 12px; height: 12px; }

.panel { width: 316px; margin-left: 5px; background: #fff; border-bottom: 1px solid #c8c8c8; margin-bottom: 3px; flex: none; }
.panel-shape { margin-top: 4px; height: 113px; }
.panel-fixed { height: 168px; }
.panel-trans { height: 322px; }
.sec-head { height: 26px; display: flex; align-items: center; gap: 6px; padding-left: 8px; font-size: 14px; color: #00618a; }
.sel-row { display: flex; gap: 2px; margin: 4px 0 0 9px; }
.sel-label { width: 264px; height: 32px; background: #ffde78; display: flex; align-items: center; gap: 6px; padding-left: 3px; color: #111; }
.star { width: 11px; height: 11px; flex: none; }
.sel-btn { width: 32px; height: 32px; background: #ffde78; padding: 3px; }
.sel-btn-focus { width: 26px; height: 26px; border: 1px dotted #111; display: flex; align-items: center; justify-content: center; }
.dis-row { display: flex; align-items: center; justify-content: space-between; margin: 10px 9px 0 9px; }
.dis { color: #b4b4b4; }
.dis-btn { width: 32px; height: 32px; border: 1px solid #bbb; padding: 3px; }
.dis-btn svg { width: 24px; height: 24px; }

.box { width: 298px; margin: 4px 0 0 9px; background: #f0f0f0; border: 1px solid #d4d4d4; padding: 8px 8px 0 8px; display: flex; flex-direction: column; gap: 2px; height: 129px; }
.box-trans { height: 283px; }
.frow { display: flex; align-items: center; justify-content: space-between; flex: none; }
.frow-32 { height: 32px; }
.frow-sel { height: 25px; }
.frow-add { height: 24px; }
.frow-amp { height: 23px; }
.sel-g0 { width: 141px; height: 25px; padding: 0 4px 0 4px; font-size: 12.500px; }
.sel-amp { width: 98px; height: 23px; background: #f5f5f5; border-color: #ccc; color: #aaa; padding: 0 5px 0 4px; }
.curve-btn { width: 32px; height: 32px; padding: 0; background: #f0f0f0; border: 1px solid #777; display: block; }
.curve-btn svg { width: 30px; height: 30px; }
.curve-on { background: #6fb0c9; border: 0; }
.curve-on svg { width: 32px; height: 32px; }
.req { display: flex; align-items: center; gap: 6px; padding-left: 3px; }
.add-btn { width: 24px; height: 24px; }
.list-row { height: 24px; flex: none; background: #fff; border: 1px solid #d4d4d4; display: flex; align-items: center; gap: 9px; padding-left: 8px; color: #00618a; }
.slider { height: 22px; flex: none; position: relative; margin-top: 1px; }
.slider::before { content: ""; position: absolute; left: 7px; right: 7px; top: 9px; height: 4px; background: #aaa; }
.thumb { position: absolute; left: 33px; top: 0; width: 10px; height: 22px; background: #aaa; }
.checks { display: flex; flex-direction: column; flex: none; }
.check { height: 23px; display: flex; align-items: center; gap: 5px; }
.cb { width: 13px; height: 13px; background: #fff; border: 1px solid #333; flex: none; }

.panel-col { height: 24px; display: flex; align-items: center; gap: 10px; padding: 2px 0 0 8px; color: #00618a; font-size: 14px; }

.preview-row { height: 28px; flex: none; display: flex; align-items: center; justify-content: space-between; padding: 0 9px 0 9px; }
.show-result { display: flex; align-items: center; gap: 2px; }
.lens { width: 24px; height: 24px; border: 1px solid #c4c4c4; background: #f5f5f5; }
.lens svg { width: 22px; height: 22px; }
.collapse-row { height: 16px; flex: none; width: 316px; margin-left: 5px; border-bottom: 1px solid #d0d0d0; display: flex; justify-content: center; padding-top: 6px; margin-bottom: 8px; }
.collapse-row .tri-up { margin-right: 6px; }
.dlg-foot { display: flex; gap: 5px; padding-left: 139px; }
.btn { width: 54px; height: 24px; border: 1px solid #bdbdbd; display: flex; align-items: center; justify-content: center; font-size: 12px; }
.btn-dis { color: #b0b0b0; }
.btn-cancel { border-color: #00618a; color: #222; }

.status { height: 10px; overflow: hidden; padding-top: 3px; font-size: 11px; font-weight: 500; color: #111; line-height: 14px; }

.watermark { position: absolute; left: 443px; top: 879px; display: flex; gap: 10px; pointer-events: none; }
.wm-hex { width: 72px; height: 82px; mix-blend-mode: multiply; }
.wm-text { display: flex; flex-direction: column; color: #fff; opacity: .5; padding-top: 12px; width: 112px; overflow: hidden; }
.wm-big { font: bold 48px/52px "Noto Sans", "Noto Sans CJK SC", sans-serif; white-space: nowrap; }
.wm-small { font: bold 12px/16px "Noto Sans", sans-serif; letter-spacing: 5px; white-space: nowrap; margin-top: -4px; }
```
